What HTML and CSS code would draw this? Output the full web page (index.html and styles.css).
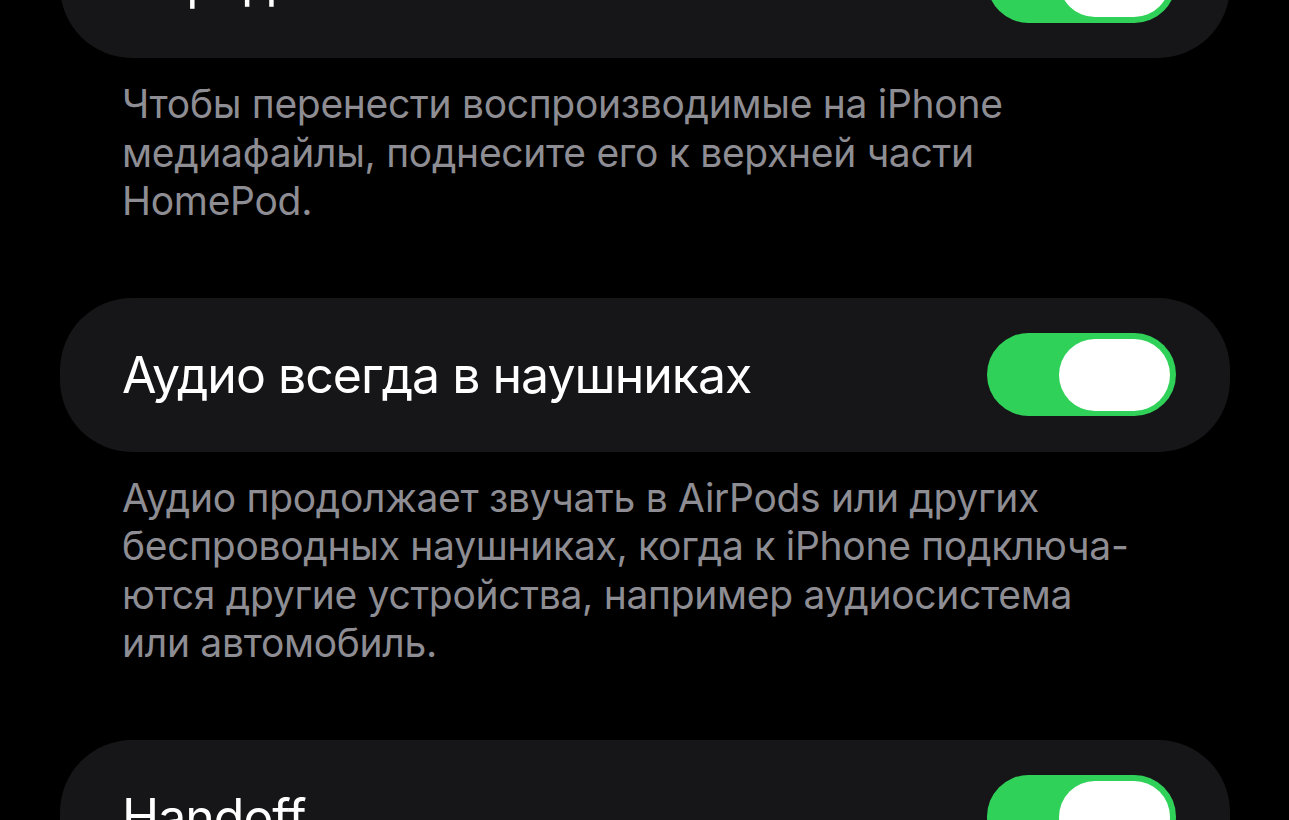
FILE: index.html
```html
<!DOCTYPE html>
<html lang="ru">
<head>
    <meta charset="UTF-8">
    <meta name="viewport" content="width=device-width, initial-scale=1.0">
    <title>Основные — AirPlay и Handoff</title>
    <link rel="stylesheet" href="styles.css">
</head>
<body>
    <div class="settings-list">
        <div class="group">
            <div class="row">
                <span class="row-title">Передача на HomePod</span>
                <div class="switch on"><div class="knob"></div></div>
            </div>
        </div>
        <p class="footer">Чтобы перенести воспроизводимые на iPhone<br>медиафайлы, поднесите его к верхней части<br>HomePod.</p>

        <div class="group">
            <div class="row">
                <span class="row-title">Аудио всегда в наушниках</span>
                <div class="switch on"><div class="knob"></div></div>
            </div>
        </div>
        <p class="footer">Аудио продолжает звучать в AirPods или других<br>беспроводных наушниках, когда к iPhone подключа-<br>ются другие устройства, например аудиосистема<br>или автомобиль.</p>

        <div class="group">
            <div class="row">
                <span class="row-title">Handoff</span>
                <div class="switch on"><div class="knob"></div></div>
            </div>
        </div>
    </div>
</body>
</html>
```

FILE: styles.css
```css
body {
    margin: 0;
    background: #000;
    font-family: 'Inter', 'Noto Sans', sans-serif;
    overflow: hidden;
    height: 820px;
}

/* list is scrolled, first group sits partly above the top */
.settings-list {
    display: flex;
    flex-direction: column;
    padding: 0 59px 0 60px;
    margin-top: -96px;
}

.group {
    background-color: #161618;
    border-radius: 72px;
}

.row {
    height: 154px;
    display: flex;
    align-items: center;
    justify-content: space-between;
    padding: 0 54px 0 62px;
}

.row-title {
    color: #fff;
    font-size: 50px;
    letter-spacing: -1px;
}

.switch {
    width: 189px;
    height: 83px;
    border-radius: 42px;
    background-color: #30d158;
    display: flex;
    align-items: center;
    justify-content: flex-end;
    padding-right: 6px;
    box-sizing: border-box;
}

.knob {
    width: 111px;
    height: 72px;
    border-radius: 36px;
    background-color: #fff;
}

.footer {
    margin: 0;
    padding: 22px 0 72px 62px;
    color: #8d8d93;
    font-size: 39px;
    line-height: 48.5px;
    letter-spacing: -0.3px;
}
```
